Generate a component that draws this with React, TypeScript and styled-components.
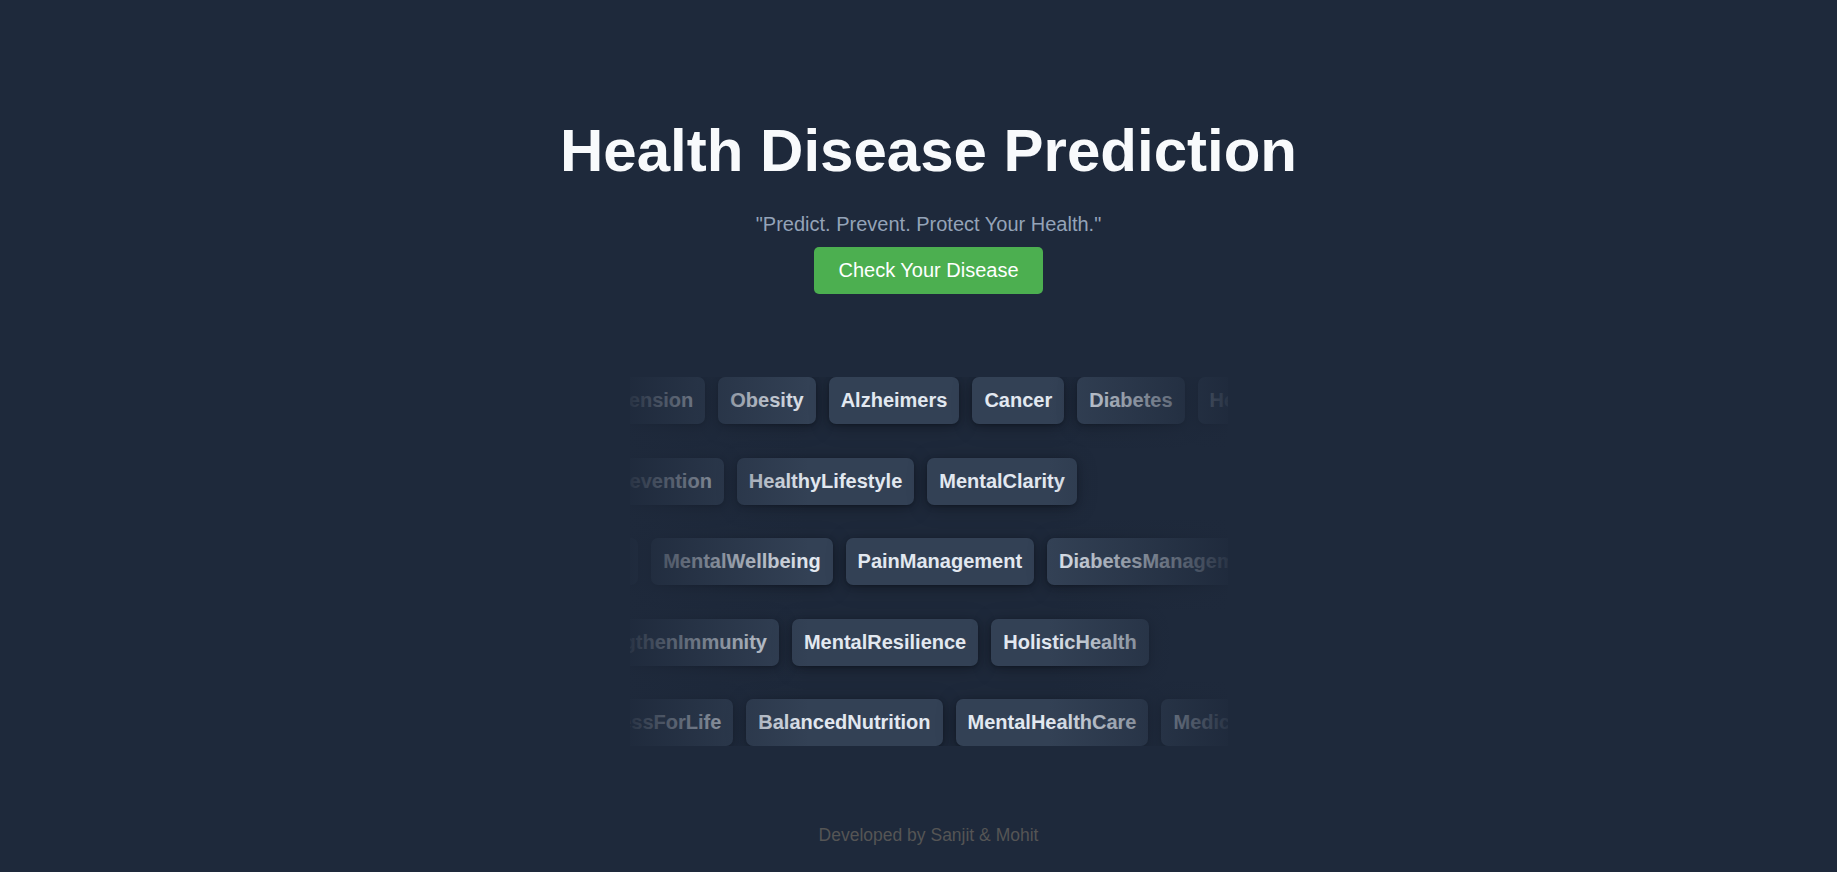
import { createGlobalStyle, styled } from "styled-components"

const GlobalStyle = createGlobalStyle`
  * {
    box-sizing: border-box;
  }

  body {
    margin: 0;
    background-color: #1e293b;
    font-family: "Liberation Sans", Arial, sans-serif;
  }
`

const Page = styled.div`
  min-height: 100vh;
  display: flex;
  flex-direction: column;
  align-items: center;
  padding: 116px 0 0 20px;
`

const Title = styled.h1`
  margin: 0;
  font-size: 60px;
  font-weight: 700;
  color: #f8fafc;
`

const Tagline = styled.p`
  margin: 28px 0 0;
  font-size: 20px;
  color: #94a3b8;
`

const Button = styled.button`
  margin-top: 11px;
  font-family: inherit;
  font-size: 20px;
  line-height: 23px;
  padding: 12px 24px;
  border: none;
  border-radius: 5px;
  background-color: #4caf50;
  color: #ffffff;
  cursor: pointer;

  &:hover {
    background-color: #43a047;
  }
`

const TagList = styled.div`
  position: relative;
  width: 598px;
  margin-top: 83px;
  display: flex;
  flex-direction: column;
  gap: 33.5px;
  overflow: hidden;
`

const Row = styled.div<{ $offset: number }>`
  display: flex;
  width: max-content;
  margin-left: ${(p) => p.$offset}px;
`

const Tag = styled.span`
  flex-shrink: 0;
  margin-right: 13px;
  padding: 12px;
  font-size: 20px;
  line-height: 23px;
  font-weight: 700;
  color: #e2e8f0;
  background-color: #334155;
  border-radius: 7px;
  box-shadow:
    0 1px 2px rgba(0, 0, 0, 0.15),
    0 2px 6px rgba(0, 0, 0, 0.15),
    0 3px 20px rgba(0, 0, 0, 0.25);
`

const Fade = styled.div`
  position: absolute;
  inset: 0;
  pointer-events: none;
  background: linear-gradient(
    90deg,
    rgba(30, 41, 59, 0.94),
    rgba(30, 41, 59, 0) 30%,
    rgba(30, 41, 59, 0) 70%,
    rgba(30, 41, 59, 0.94)
  );
`

const Footer = styled.footer`
  margin-top: 79px;
  font-size: 17.5px;
  color: #555555;
`

const rows: { offset: number; tags: string[] }[] = [
  { offset: -76, tags: ["Hypertension", "Obesity", "Alzheimers", "Cancer", "Diabetes", "HeartDisease"] },
  { offset: -33, tags: ["Prevention", "HealthyLifestyle", "MentalClarity"] },
  { offset: -132, tags: ["Mindfulness", "MentalWellbeing", "PainManagement", "DiabetesManagement"] },
  { offset: -69, tags: ["StrengthenImmunity", "MentalResilience", "HolisticHealth"] },
  { offset: -58, tags: ["FitnessForLife", "BalancedNutrition", "MentalHealthCare", "MedicalCheckup"] },
]

export default function App() {
  return (
    <>
      <GlobalStyle />
      <Page>
        <Title>Health Disease Prediction</Title>
        <Tagline>"Predict. Prevent. Protect Your Health."</Tagline>
        <Button>Check Your Disease</Button>
        <TagList>
          {rows.map((row, i) => (
            <Row key={i} $offset={row.offset}>
              {row.tags.map((tag) => (
                <Tag key={tag}>{tag}</Tag>
              ))}
            </Row>
          ))}
          <Fade />
        </TagList>
        <Footer>Developed by Sanjit &amp; Mohit</Footer>
      </Page>
    </>
  )
}
